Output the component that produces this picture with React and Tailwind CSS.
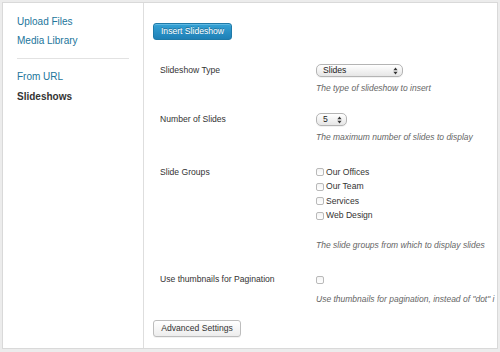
import React, { useState } from "react";

const font = { fontFamily: '"Liberation Sans", Arial, sans-serif' };

// little up/down arrows used by the native-looking selects
const SelectArrows = () => (
  <svg width="5" height="8" viewBox="0 0 5 8" className="shrink-0">
    <path d="M2.5 0.5 L4.6 3.2 L0.4 3.2 Z" fill="#333" />
    <path d="M2.5 7.5 L4.6 4.8 L0.4 4.8 Z" fill="#333" />
  </svg>
);

const FakeSelect = ({ value, width }) => (
  <div
    className="flex items-center justify-between h-[13px] pl-[6px] pr-[4px] border border-[#b4b4b4] rounded-[5px] bg-gradient-to-b from-white to-[#e6e6e6] shadow-[0_1px_0_rgba(0,0,0,0.05)]"
    style={{ width }}
  >
    <span className="text-[8.6px] leading-[11px] text-[#222]">{value}</span>
    <SelectArrows />
  </div>
);

const Checkbox = ({ checked, onChange }) => (
  <button
    type="button"
    onClick={onChange}
    className="w-[8px] h-[8px] shrink-0 border border-[#b9b9b9] rounded-[2px] bg-gradient-to-b from-[#f4f4f4] to-white flex items-center justify-center"
  >
    {checked && <span className="w-[4px] h-[4px] bg-[#333] rounded-[1px]" />}
  </button>
);

const Description = ({ children }) => (
  <p className="text-[8.5px] leading-[13px] italic text-[#666] whitespace-nowrap">{children}</p>
);

const App = () => {
  const [groups, setGroups] = useState({
    "Our Offices": false,
    "Our Team": false,
    Services: false,
    "Web Design": false,
  });
  const [useThumbs, setUseThumbs] = useState(false);

  const toggleGroup = (name) => {
    setGroups({ ...groups, [name]: !groups[name] });
  };

  return (
    <div className="w-[500px] h-[352px] bg-[#ececec] p-[2px] pb-[3px]" style={font}>
      <div className="h-full border border-[#d9d9d9] bg-white flex overflow-hidden">
        {/* sidebar */}
        <div className="w-[141px] shrink-0 border-r border-[#dedede] px-[14px] pt-[12px]">
          <a className="block text-[10px] leading-[14px] text-[#21759b]">Upload Files</a>
          <a className="block mt-[5px] text-[10px] leading-[14px] text-[#21759b]">Media Library</a>
          <div className="mt-[10px] h-px bg-[#e2e2e2]" />
          <a className="block mt-[11px] text-[10px] leading-[14px] text-[#21759b]">From URL</a>
          <div className="mt-[6px] text-[10px] leading-[14px] font-bold text-[#333]">Slideshows</div>
        </div>

        {/* main form */}
        <div className="flex-1 min-w-0 overflow-hidden pl-[9px] pt-[20px]">
          <button
            type="button"
            className="block h-[17px] w-[79px] rounded-[3px] border border-[#1f7aa8] bg-gradient-to-b from-[#34a2d6] to-[#1f80b6] text-white text-[8.6px] leading-[15px] [text-shadow:0_-1px_0_rgba(0,0,0,0.3)] shadow-[inset_0_1px_0_rgba(140,210,240,0.5)]"
          >
            Insert Slideshow
          </button>

          <div className="pl-[7px]">
            {/* slideshow type */}
            <div className="flex mt-[24px]">
              <div className="w-[156px] shrink-0 text-[8.6px] leading-[13px] text-[#333]">Slideshow Type</div>
              <div>
                <FakeSelect value="Slides" width="87px" />
                <div className="mt-[5px]">
                  <Description>The type of slideshow to insert</Description>
                </div>
              </div>
            </div>

            {/* number of slides */}
            <div className="flex mt-[18px]">
              <div className="w-[156px] shrink-0 text-[8.6px] leading-[13px] text-[#333]">Number of Slides</div>
              <div>
                <FakeSelect value="5" width="31px" />
                <div className="mt-[5px]">
                  <Description>The maximum number of slides to display</Description>
                </div>
              </div>
            </div>

            {/* slide groups */}
            <div className="flex mt-[21px]">
              <div className="w-[156px] shrink-0 text-[8.6px] leading-[14.5px] text-[#333]">Slide Groups</div>
              <div>
                {Object.keys(groups).map((name) => (
                  <label key={name} className="flex items-center h-[14.5px]">
                    <Checkbox checked={groups[name]} onChange={() => toggleGroup(name)} />
                    <span className="ml-[2px] text-[8.6px] text-[#333]">{name}</span>
                  </label>
                ))}
                <div className="mt-[16px]">
                  <Description>The slide groups from which to display slides</Description>
                </div>
              </div>
            </div>

            {/* thumbnails */}
            <div className="flex mt-[21px]">
              <div className="w-[156px] shrink-0 text-[8.6px] leading-[13px] text-[#333]">Use thumbnails for Pagination</div>
              <div>
                <div className="h-[13px] flex items-center">
                  <Checkbox checked={useThumbs} onChange={() => setUseThumbs(!useThumbs)} />
                </div>
                <div className="mt-[7px]">
                  <Description>Use thumbnails for pagination, instead of "dot" i</Description>
                </div>
              </div>
            </div>
          </div>

          <button
            type="button"
            className="block mt-[14px] h-[17px] w-[88px] rounded-[3px] border border-[#bdbdbd] bg-gradient-to-b from-white to-[#ededed] text-[#333] text-[8.6px] leading-[15px] shadow-[0_1px_0_rgba(0,0,0,0.05)]"
          >
            Advanced Settings
          </button>
        </div>
      </div>
    </div>
  );
};

export default App;
